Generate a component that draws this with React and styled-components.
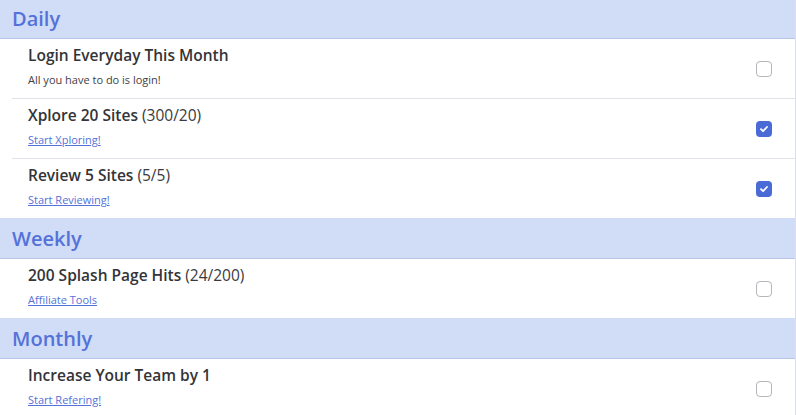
import React from 'react';
import styled, { createGlobalStyle } from 'styled-components';

const GlobalStyle = createGlobalStyle`
    body {
        margin: 0;
        background: #ffffff;
        font-family: "Open Sans", "Lato", sans-serif;
    }
`;

// list is scrolled a couple of pixels, so the first header is cut at the top
const Wrapper = styled.div`
    width: 796px;
    margin-top: -2px;
    box-sizing: border-box;
    border-right: 1px solid #dcdfe6;
`;

const GroupHeader = styled.div`
    height: 40px;
    display: flex;
    align-items: center;
    padding: 0 12px;
    background-color: #d1dcf6;
    border-bottom: 1px solid #b9c5e8;
    color: #5472d9;
    font-size: 20px;
    font-weight: 600;
`;

const Row = styled.div`
    height: 59px;
    margin-left: 12px;
    padding: 0 23px 0 16px;
    display: flex;
    align-items: center;
    justify-content: space-between;
    border-bottom: ${props => props.last ? "none" : "1px solid #e1e3e8"};
`;

const Info = styled.div`
    display: flex;
    flex-direction: column;
    align-items: flex-start;
    gap: 8px;
    margin-top: -5px;
`;

const Title = styled.div`
    font-size: 15.5px;
    line-height: 20px;
    font-weight: 600;
    color: #333438;
`;

const Count = styled.span`
    font-weight: 400;
    color: #3a3b40;
`;

const Sub = styled.div`
    font-size: 11px;
    line-height: 14px;
    color: #3f4045;
`;

const SubLink = styled.a`
    font-size: 11px;
    line-height: 14px;
    color: #5472d9;
    text-decoration: underline;
`;

const Box = styled.div`
    width: 16px;
    height: 16px;
    box-sizing: border-box;
    border-radius: 4px;
    border: ${props => props.checked ? "none" : "1px solid #b4b6bb"};
    background: ${props => props.checked ? "#4a6bd6" : "#ffffff"};
    display: flex;
    align-items: center;
    justify-content: center;
`;

const Check = ({ checked }) => (
    <Box checked={checked}>
        {checked && (
            <svg width="10" height="10" viewBox="0 0 10 10">
                <path d="M2 5.2 L4.1 7.2 L8 3" fill="none" stroke="#fff" strokeWidth="1.8" strokeLinecap="round" strokeLinejoin="round" />
            </svg>
        )}
    </Box>
);

const groups = [
    {
        name: "Daily",
        items: [
            { title: "Login Everyday This Month", sub: "All you have to do is login!", plain: true, checked: false },
            { title: "Xplore 20 Sites", count: "(300/20)", sub: "Start Xploring!", checked: true },
            { title: "Review 5 Sites", count: "(5/5)", sub: "Start Reviewing!", checked: true },
        ],
    },
    {
        name: "Weekly",
        items: [
            { title: "200 Splash Page Hits", count: "(24/200)", sub: "Affiliate Tools", checked: false },
        ],
    },
    {
        name: "Monthly",
        items: [
            { title: "Increase Your Team by 1", sub: "Start Refering!", checked: false },
        ],
    },
];

const App = function () {
    return (
        <Wrapper>
            <GlobalStyle />
            {groups.map(g => (
                <div key={g.name}>
                    <GroupHeader>{g.name}</GroupHeader>
                    {g.items.map((it, i) => (
                        <Row key={it.title} last={i === g.items.length - 1}>
                            <Info>
                                <Title>
                                    {it.title}
                                    {it.count && <Count> {it.count}</Count>}
                                </Title>
                                {it.plain ? <Sub>{it.sub}</Sub> : <SubLink href="#">{it.sub}</SubLink>}
                            </Info>
                            <Check checked={it.checked} />
                        </Row>
                    ))}
                </div>
            ))}
        </Wrapper>
    );
};

export default App;
